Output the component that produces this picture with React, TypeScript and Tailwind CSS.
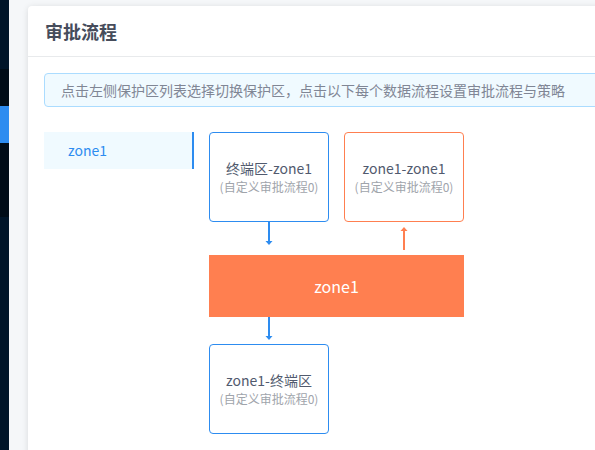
const FONT = { fontFamily: '"Noto Sans CJK SC", "Noto Sans", sans-serif' }

function ArrowDown({ color }: { color: string }) {
  return (
    <svg width="10" height="24" viewBox="0 0 10 24" className="block">
      <line x1="5" y1="0" x2="5" y2="20" stroke={color} strokeWidth="2" />
      <path d="M1.5 19 L8.5 19 L5 23 Z" fill={color} />
    </svg>
  )
}

function ArrowUp({ color }: { color: string }) {
  return (
    <svg width="10" height="24" viewBox="0 0 10 24" className="block">
      <line x1="5" y1="4" x2="5" y2="24" stroke={color} strokeWidth="2" />
      <path d="M1.5 5 L8.5 5 L5 1 Z" fill={color} />
    </svg>
  )
}

function FlowBox({ title, orange }: { title: string; orange?: boolean }) {
  return (
    <div
      className={`w-[120px] h-[90px] rounded-[4px] border flex flex-col items-center justify-center bg-white ${
        orange ? 'border-[#ff7f50]' : 'border-[#2d8cf0]'
      }`}
    >
      <div className="text-[14px] leading-[20px] text-[#515a6e]">{title}</div>
      <div className="text-[12px] leading-[18px] text-[#a0a4ab]">(自定义审批流程0)</div>
    </div>
  )
}

export default function App() {
  return (
    <div className="flex h-[450px] w-[595px] overflow-hidden bg-[#f5f7f9]" style={FONT}>
      <div className="w-[9px] flex flex-col shrink-0">
        <div className="h-[69px] bg-[#001529]" />
        <div className="h-[37px] bg-[#000c17]" />
        <div className="h-[37px] bg-[#2d8cf0]" />
        <div className="h-[74px] bg-[#000c17]" />
        <div className="flex-1 bg-[#001529]" />
      </div>

      <div className="flex-1 pl-[19px] pt-[6px]">
        <div className="w-[600px] h-[460px] bg-white rounded-[4px] shadow-[0_1px_6px_rgba(0,0,0,0.12)]">
          <div className="h-[51px] px-[17px] flex items-center border-b border-[#e8eaec]">
            <h1 className="text-[18px] font-bold text-[#464c5b]">审批流程</h1>
          </div>

          <div className="px-[16px] pt-[16px]">
            <div className="h-[34px] rounded-[4px] border border-[#abdcff] bg-[#f0faff] flex items-center pl-[16px]">
              <span className="text-[14px] text-[#808695] whitespace-nowrap">
                点击左侧保护区列表选择切换保护区，点击以下每个数据流程设置审批流程与策略
              </span>
            </div>

            <div className="flex mt-[25px] gap-[15px]">
              <div className="w-[150px]">
                <div className="h-[37px] bg-[#f0faff] border-r-2 border-[#2d8cf0] flex items-center pl-[24px] text-[14px] text-[#2d8cf0]">
                  zone1
                </div>
              </div>

              <div className="flex flex-col w-[255px]">
                <div className="flex gap-[15px]">
                  <FlowBox title="终端区-zone1" />
                  <FlowBox title="zone1-zone1" orange />
                </div>
                <div className="flex h-[33px]">
                  <div className="w-[120px] flex justify-center">
                    <ArrowDown color="#2d8cf0" />
                  </div>
                  <div className="w-[15px]" />
                  <div className="w-[120px] flex justify-center items-start pt-[4px]">
                    <ArrowUp color="#ff7f50" />
                  </div>
                </div>
                <div className="h-[62px] bg-[#ff7f50] flex items-center justify-center text-[16px] text-white">
                  zone1
                </div>
                <div className="h-[27px] w-[120px] flex justify-center">
                  <ArrowDown color="#2d8cf0" />
                </div>
                <FlowBox title="zone1-终端区" />
              </div>
            </div>
          </div>
        </div>
      </div>
    </div>
  )
}
